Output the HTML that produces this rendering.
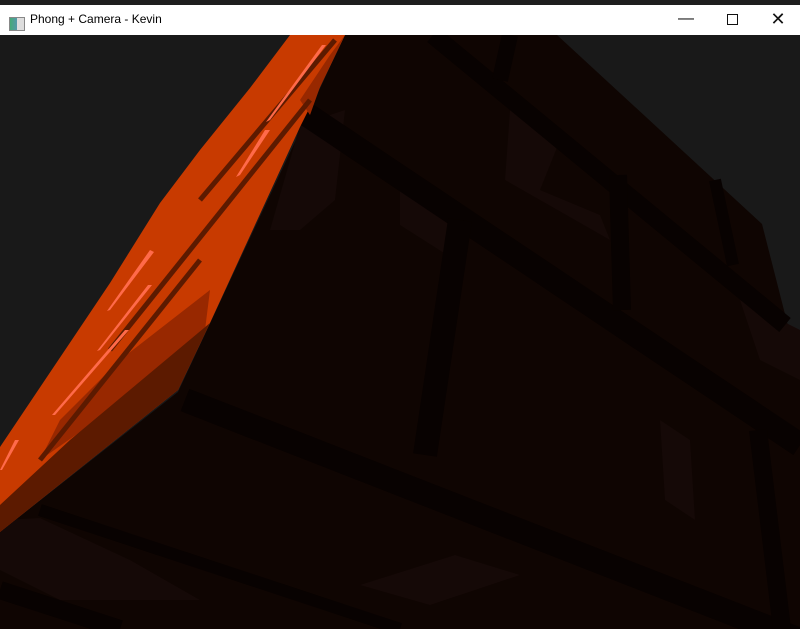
<!DOCTYPE html>
<html><head><style>
html,body{margin:0;padding:0;width:800px;height:629px;overflow:hidden;background:#191919;font-family:"Liberation Sans",sans-serif}
#top{position:absolute;left:0;top:0;width:800px;height:5px;background:#1e1e1e}
#bar{position:absolute;left:0;top:5px;width:800px;height:30px;background:#fff}
#title{position:absolute;left:30px;top:12px;font-size:12px;color:#000}
#ic{position:absolute;left:9px;top:12px;width:14px;height:12px;border:1px solid #888;background:linear-gradient(90deg,#4a7 0,#59a 50%,#ddd 50%)}
.b{position:absolute;top:5px;width:46px;height:30px;text-align:center;line-height:28px;font-size:16px;color:#111}
svg{position:absolute;left:0;top:35px}
</style></head><body>
<div id="top"></div>
<div id="bar"><div id="ic"></div></div>
<div id="title">Phong + Camera - Kevin</div>
<div class="b" style="left:663px">&#8212;</div>
<div class="b" style="left:709px"><span style="display:inline-block;width:9px;height:9px;border:1px solid #111;margin-top:9px"></span></div>
<div class="b" style="left:755px;font-size:18px">&#10005;</div>
<svg width="800" height="594" viewBox="0 35 800 594">
<rect x="0" y="35" width="800" height="594" fill="#191919"/>
<polygon points="345,35 557,35 762,224 800,373 800,629 0,629 0,532 178,392" fill="#0f0502"/>
<polygon points="300,125 345,110 335,200 300,230 270,230" fill="#150907"/>
<polygon points="510,110 560,140 540,190 600,215 610,240 505,180" fill="#150907"/>
<polygon points="400,177 460,220 455,260 400,225" fill="#150907"/>
<polygon points="660,420 690,440 695,520 665,500" fill="#150907"/>
<polygon points="0,520 40,518 130,560 200,600 60,600 0,570" fill="#150907"/>
<polygon points="360,585 455,555 520,575 430,605" fill="#150907"/>
<polygon points="740,300 800,330 800,380 760,360" fill="#150907"/>
<g stroke="#080201" stroke-linecap="butt" fill="none">
<line x1="433" y1="35" x2="785" y2="325" stroke-width="18"/>
<line x1="300" y1="110" x2="800" y2="445" stroke-width="24"/>
<line x1="185" y1="400" x2="800" y2="640" stroke-width="24"/>
<line x1="0" y1="590" x2="120" y2="629" stroke-width="18"/>
<line x1="40" y1="510" x2="400" y2="629" stroke-width="12"/>
<line x1="460" y1="220" x2="425" y2="455" stroke-width="24"/>
<line x1="618" y1="175" x2="622" y2="310" stroke-width="18"/>
<line x1="715" y1="180" x2="733" y2="265" stroke-width="12"/>
<line x1="758" y1="430" x2="782" y2="629" stroke-width="18"/>
<line x1="510" y1="35" x2="500" y2="80" stroke-width="16"/>
</g>
<polygon points="290,35 345,35 320,87 300,127 210,323 178,390 0,532 0,447 110,283 160,203 200,150 250,88" fill="#c83a00"/>
<polygon points="210,290 120,360 60,420 40,460 140,390 205,330" fill="#982800"/>
<polygon points="210,323 178,390 0,532 0,505 70,440" fill="#5c1a00"/>
<polygon points="320,87 345,35 330,55 300,100 310,115" fill="#982800"/>
<g stroke="#5c1a00" fill="none" stroke-width="5">
<line x1="335" y1="40" x2="200" y2="200"/>
<line x1="310" y1="100" x2="110" y2="350"/>
<line x1="200" y1="260" x2="40" y2="460"/>
</g>
<g fill="#ff6a4a">
<polygon points="322,45 326,45 270,120 266,122"/>
<polygon points="265,130 270,130 240,175 236,177"/>
<polygon points="148,285 152,285 100,350 97,351"/>
<polygon points="150,250 154,252 110,310 107,311"/>
<polygon points="125,330 129,330 55,415 52,415"/>
<polygon points="15,440 19,440 2,470 0,470"/>
</g>
</svg>
</body></html>
